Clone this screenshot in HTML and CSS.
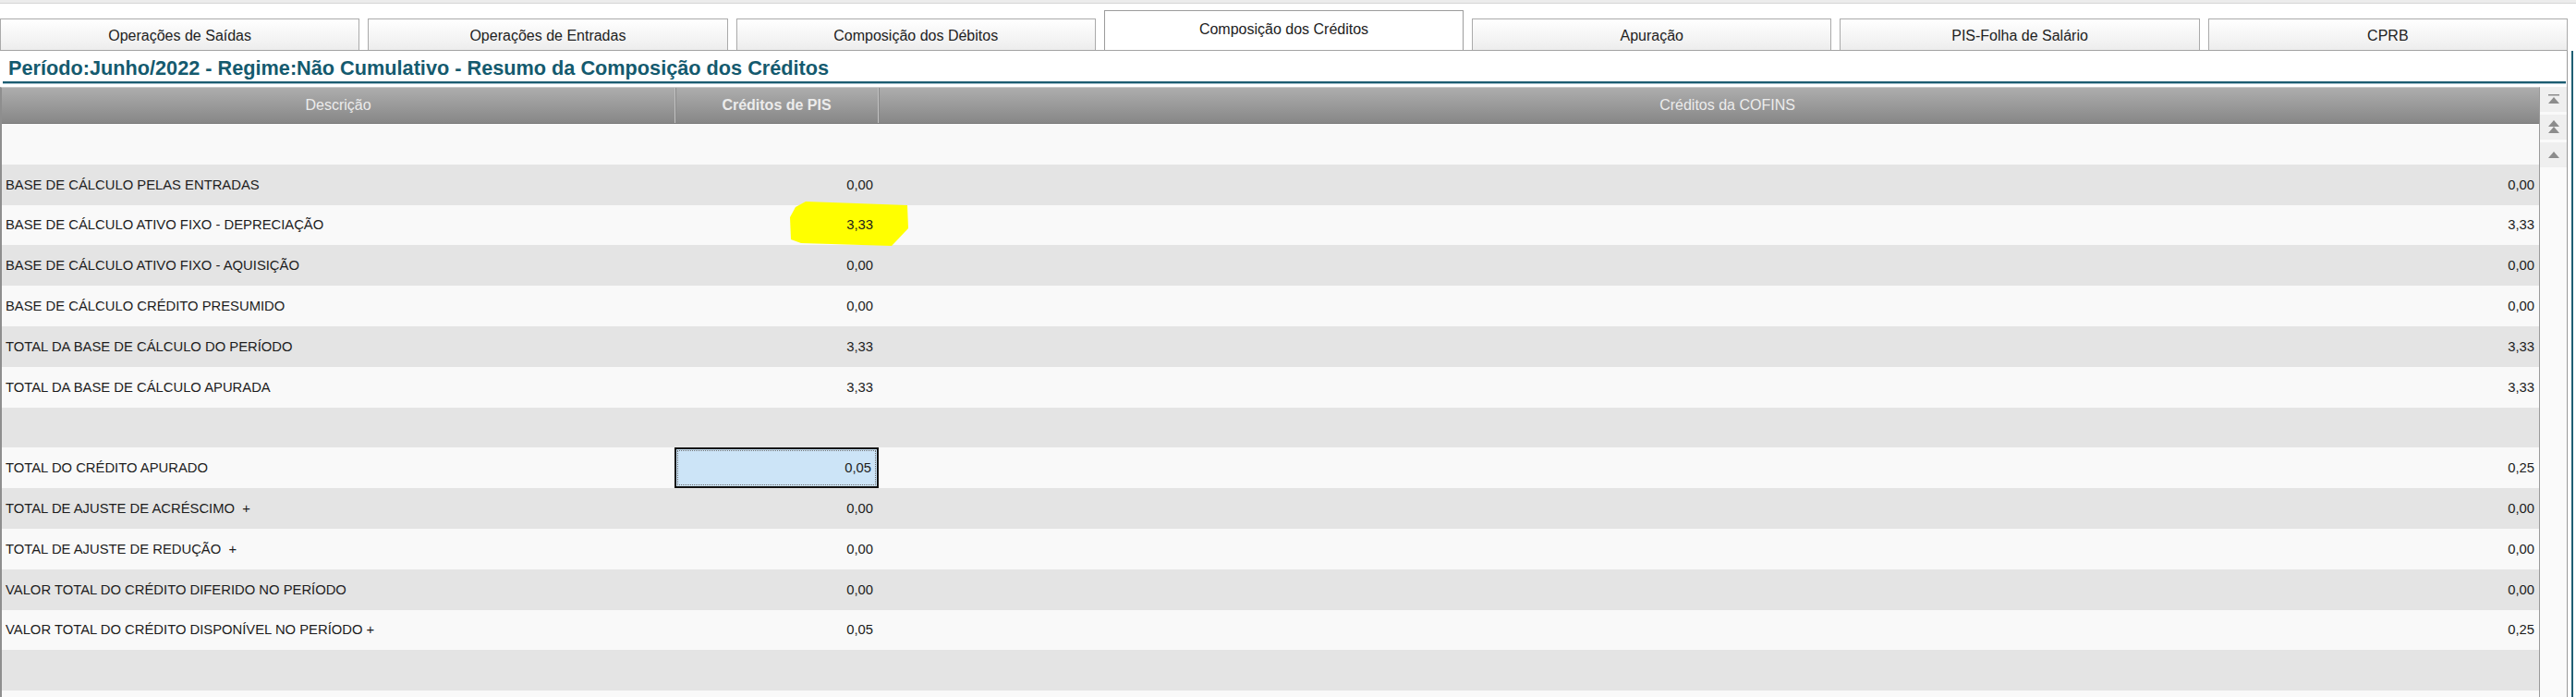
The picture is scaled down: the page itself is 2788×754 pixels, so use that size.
FILE: index.html
```html
<!DOCTYPE html>
<html lang="pt-BR">
<head>
  <meta charset="UTF-8">
  <title>Apuração PIS/COFINS</title>
  <link rel="stylesheet" href="styles.css">
</head>
<body>
  <div class="topbar"></div>

  <div class="tabs">
    <div class="tab">Operações de Saídas</div>
    <div class="tab">Operações de Entradas</div>
    <div class="tab">Composição dos Débitos</div>
    <div class="tab active">Composição dos Créditos</div>
    <div class="tab">Apuração</div>
    <div class="tab">PIS-Folha de Salário</div>
    <div class="tab">CPRB</div>
  </div>

  <div class="panel">
    <h1 class="title">Período:Junho/2022 - Regime:Não Cumulativo - Resumo da Composição dos Créditos</h1>

    <div class="table-wrap">
      <div class="grid">
        <div class="head">
          <div class="col-desc">Descrição</div>
          <div class="col-pis strong">Créditos de PIS</div>
          <div class="col-cofins">Créditos da COFINS</div>
        </div>

        <div class="row"><div class="col-desc"></div><div class="col-pis"></div><div class="col-cofins"></div></div>
        <div class="row"><div class="col-desc">BASE DE CÁLCULO PELAS ENTRADAS</div><div class="col-pis">0,00</div><div class="col-cofins">0,00</div></div>
        <div class="row">
          <div class="col-desc">BASE DE CÁLCULO ATIVO FIXO - DEPRECIAÇÃO</div>
          <div class="col-pis marked">
            <svg class="marker" width="130" height="50" viewBox="0 0 130 50">
              <polygon points="17,0 127,4 128,29 110,48 12,45 1,41 0,17 6,6" fill="#ffff00"/>
            </svg>
            <span>3,33</span>
          </div>
          <div class="col-cofins">3,33</div>
        </div>
        <div class="row"><div class="col-desc">BASE DE CÁLCULO ATIVO FIXO - AQUISIÇÃO</div><div class="col-pis">0,00</div><div class="col-cofins">0,00</div></div>
        <div class="row"><div class="col-desc">BASE DE CÁLCULO CRÉDITO PRESUMIDO</div><div class="col-pis">0,00</div><div class="col-cofins">0,00</div></div>
        <div class="row"><div class="col-desc">TOTAL DA BASE DE CÁLCULO DO PERÍODO</div><div class="col-pis">3,33</div><div class="col-cofins">3,33</div></div>
        <div class="row"><div class="col-desc">TOTAL DA BASE DE CÁLCULO APURADA</div><div class="col-pis">3,33</div><div class="col-cofins">3,33</div></div>
        <div class="row"><div class="col-desc"></div><div class="col-pis"></div><div class="col-cofins"></div></div>
        <div class="row"><div class="col-desc">TOTAL DO CRÉDITO APURADO</div><div class="col-pis selected">0,05</div><div class="col-cofins">0,25</div></div>
        <div class="row"><div class="col-desc">TOTAL DE AJUSTE DE ACRÉSCIMO&nbsp; +</div><div class="col-pis">0,00</div><div class="col-cofins">0,00</div></div>
        <div class="row"><div class="col-desc">TOTAL DE AJUSTE DE REDUÇÃO&nbsp; +</div><div class="col-pis">0,00</div><div class="col-cofins">0,00</div></div>
        <div class="row"><div class="col-desc">VALOR TOTAL DO CRÉDITO DIFERIDO NO PERÍODO</div><div class="col-pis">0,00</div><div class="col-cofins">0,00</div></div>
        <div class="row"><div class="col-desc">VALOR TOTAL DO CRÉDITO DISPONÍVEL NO PERÍODO +</div><div class="col-pis">0,05</div><div class="col-cofins">0,25</div></div>
        <div class="row"><div class="col-desc"></div><div class="col-pis"></div><div class="col-cofins"></div></div>
        <div class="row"><div class="col-desc"></div><div class="col-pis"></div><div class="col-cofins"></div></div>
      </div>

      <div class="scroll">
        <div class="scroll-btn">
          <svg width="12" height="12" viewBox="0 0 12 12"><rect x="0" y="0" width="12" height="1.5" fill="#8c8c8c"/><polygon points="6,3 12,10 0,10" fill="#8c8c8c"/></svg>
        </div>
        <div class="scroll-btn">
          <svg width="12" height="15" viewBox="0 0 12 15"><polygon points="6,0 12,7 0,7" fill="#8c8c8c"/><polygon points="6,7 12,14 0,14" fill="#8c8c8c"/></svg>
        </div>
        <div class="scroll-btn">
          <svg width="12" height="8" viewBox="0 0 12 8"><polygon points="6,0 12,7 0,7" fill="#8c8c8c"/></svg>
        </div>
      </div>
    </div>
  </div>
</body>
</html>
```

FILE: styles.css
```css
body {
  margin: 0;
  background-color: #fff;
  font-family: 'Liberation Sans', Arial, sans-serif;
  color: #1c1c1c;
  overflow: hidden;
}

.topbar {
  height: 3px;
  background-color: #ececec;
  border-bottom: 1px solid #d6d6d6;
}

.tabs {
  display: flex;
  align-items: flex-end;
  gap: 9px;
  height: 51px;
  width: 2779px;
  box-sizing: border-box;
  border-bottom: 1px solid #a3a3a3;
}

.tab {
  flex: 1;
  height: 34px;
  box-sizing: border-box;
  border: 1px solid #aaaaaa;
  border-bottom: none;
  background: linear-gradient(#ffffff, #ededed);
  display: flex;
  align-items: center;
  justify-content: center;
  font-size: 16px;
  color: #222;
  padding-top: 3px;
}

.tab.active {
  height: 43px;
  background: #fff;
  border-color: #9c9c9c;
  padding-top: 0;
  padding-bottom: 2px;
}

.panel {
  width: 2779px;
  box-sizing: border-box;
  border-right: 1px solid #9a9a9a;
  box-shadow: 4px 0 0 #fff, 6px 0 0 #1f5f73;
}

.title {
  margin: 0 1px 0 3px;
  height: 33px;
  padding: 0 0 0 6px;
  border-bottom: 2px solid #1c5c71;
  box-shadow: 0 1px 0 #a7c3cd;
  font-size: 21.7px;
  font-weight: bold;
  line-height: 37px;
  color: #145a6e;
  white-space: nowrap;
}

.table-wrap {
  display: flex;
  margin-top: 4px;
  height: 660px;
}

.grid {
  width: 2749px;
  box-sizing: border-box;
  border-left: 2px solid #8e8e8e;
  border-right: 1px solid #9a9a9a;
  border-top: 1px solid #c9c9c9;
}

.head {
  display: flex;
  height: 38px;
  background: linear-gradient(#adadad, #878787);
  border-bottom: 1px solid #7a7a7a;
  color: #ececec;
  font-size: 16px;
}

.head > div {
  display: flex;
  align-items: center;
  justify-content: center;
}

.head .col-pis,
.head .col-cofins {
  border-left: 1px solid #c2c2c2;
  box-shadow: inset 1px 0 0 #8a8a8a;
}

.head .col-cofins {
  padding-left: 40px;
}

.head .strong {
  font-weight: bold;
}

.col-desc {
  width: 728px;
  flex: none;
}

.col-pis {
  width: 220px;
  flex: none;
  box-sizing: border-box;
}

.col-cofins {
  flex: 1;
}

.row {
  display: flex;
  height: 43.8px;
  font-size: 14.8px;
  background-color: #f9f9f9;
}

.row:nth-child(odd) {
  background-color: #e4e4e4;
}

.row > div {
  display: flex;
  align-items: center;
  box-sizing: border-box;
}

.row .col-desc {
  padding-left: 4px;
}

.row .col-pis {
  justify-content: flex-end;
  padding-right: 6px;
  margin-left: 1px;
}

.row .col-cofins {
  justify-content: flex-end;
  padding-right: 5px;
}

.marked {
  position: relative;
}

.marked span {
  position: relative;
}

.marker {
  position: absolute;
  left: 124px;
  top: -4px;
}

.selected {
  position: relative;
  border: 2px solid #111;
  background-color: #cce4f7;
}

.row .selected {
  margin-left: 0;
  width: 221px;
  padding-right: 6px;
}

.selected::after {
  content: '';
  position: absolute;
  inset: 1px;
  border: 1px dotted #6b6b6b;
}

.scroll {
  width: 29px;
  background-color: #fafafa;
  display: flex;
  flex-direction: column;
  gap: 3px;
}

.scroll-btn {
  height: 27px;
  background-color: #efefef;
  display: flex;
  align-items: center;
  justify-content: center;
}
```
